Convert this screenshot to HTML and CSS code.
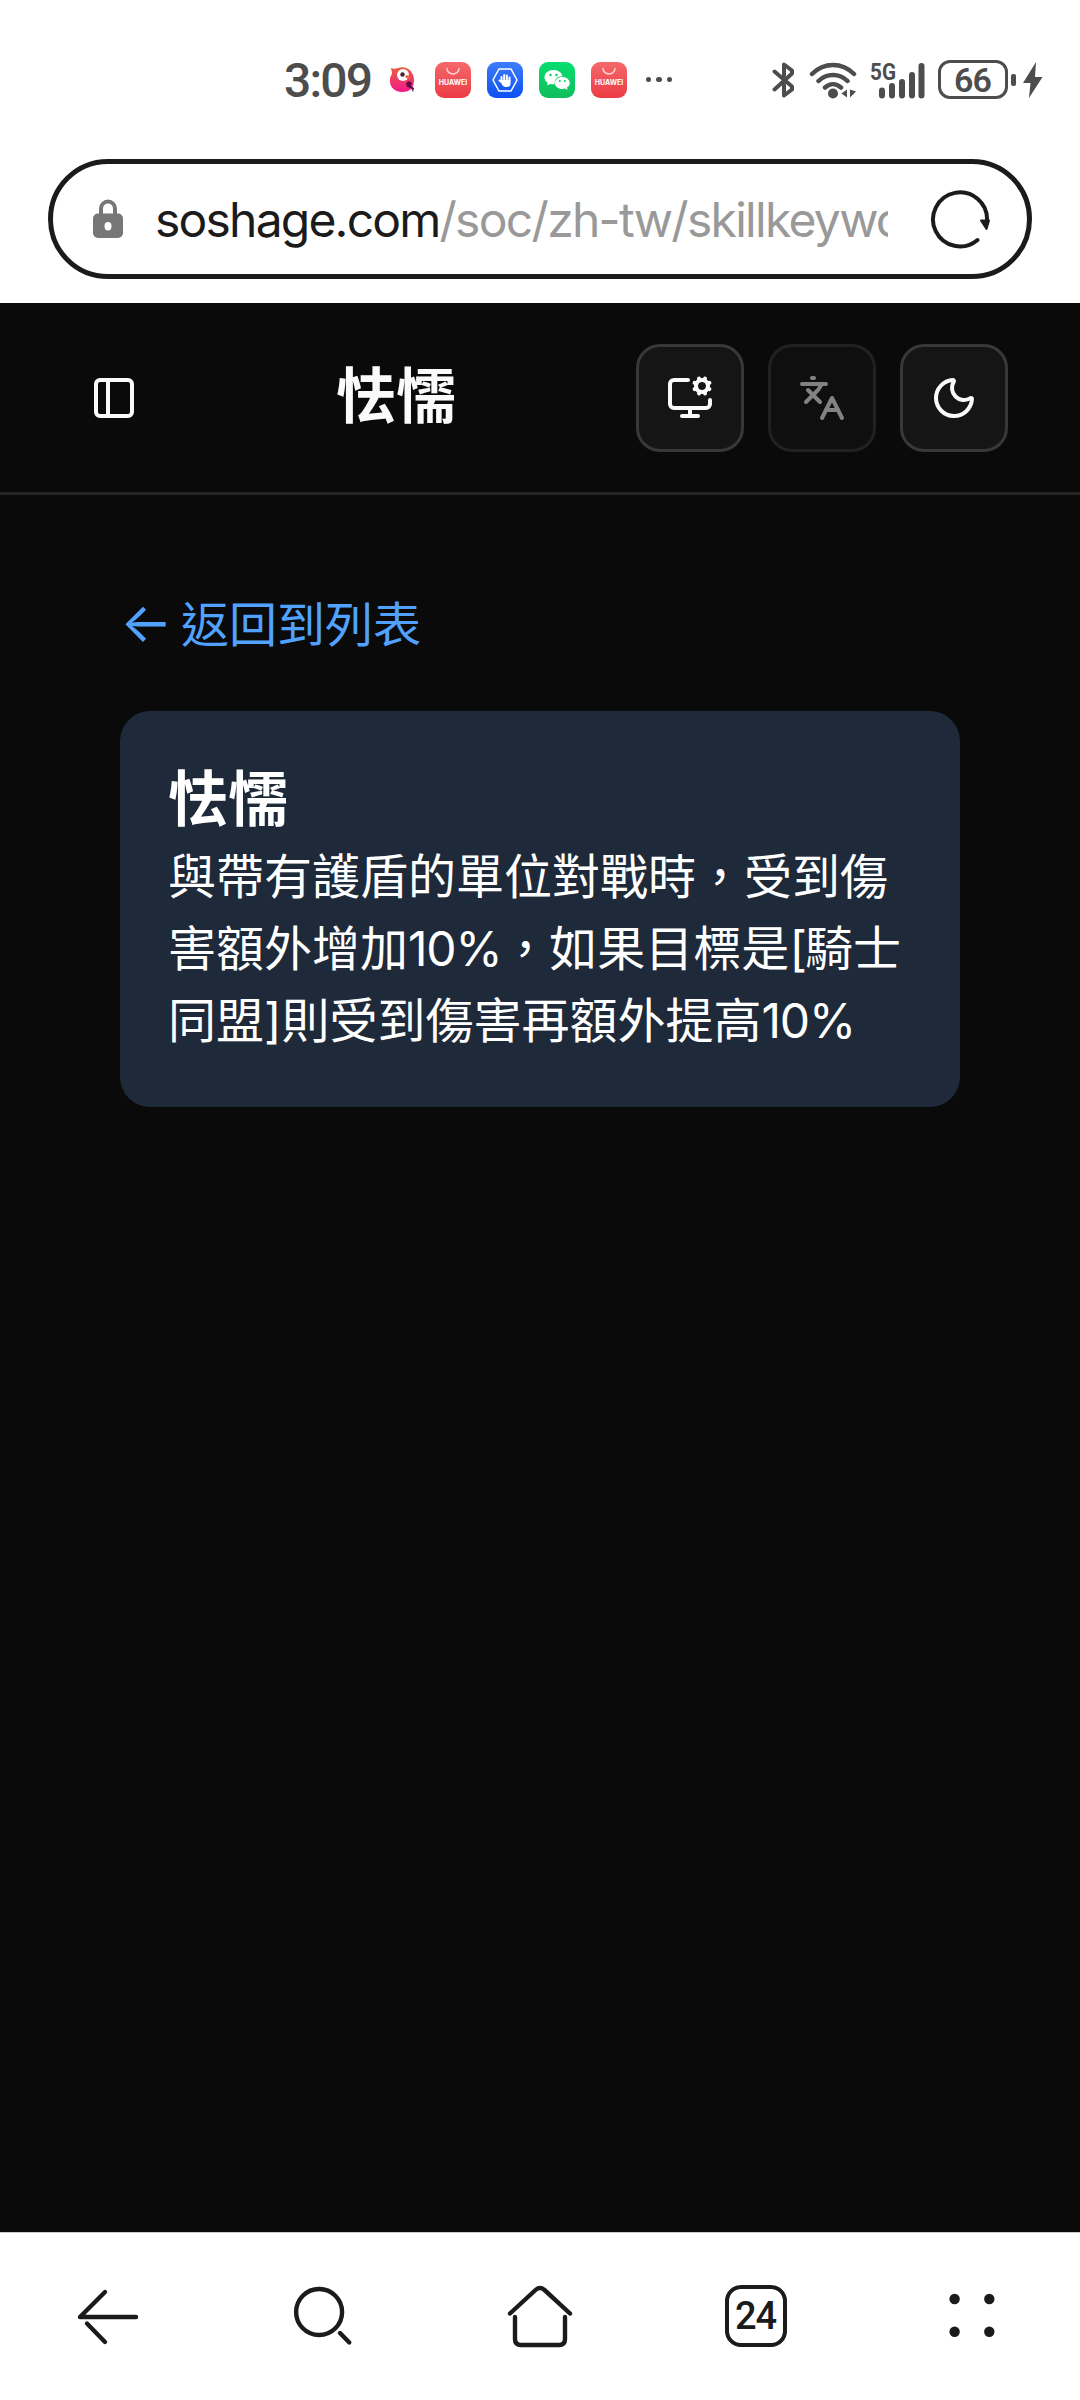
FILE: index.html
```html
<!DOCTYPE html>
<html lang="zh-Hant-TW">
<head>
<meta charset="utf-8">
<title>怯懦</title>
<link rel="stylesheet" href="styles.css">
</head>
<body>
<div class="status">
  <span class="clock">3:09</span>
  <div class="notices">
    <svg class="bird" viewBox="0 0 26 28">
      <defs><linearGradient id="bird" x1="0" y1="0" x2="0" y2="1"><stop offset="0" stop-color="#e8603c"/><stop offset="1" stop-color="#f5168c"/></linearGradient></defs>
      <path fill="url(#bird)" d="M2 2c2 1 4 1 7 0 8-3 16 3 16 12S20 26 13 26 0 21 1 13c.2-3 2-4 2-6S2 4 2 2z"/>
      <circle cx="14" cy="9" r="6" fill="#fff"/><circle cx="13.500" cy="8.500" r="2.200" fill="#4a2030"/>
      <path fill="#f2603c" d="M16 10c3-2 6 0 5 4-2-2-4-1-5-4z"/>
      <path fill="#5b0d4a" d="M17 17l3-2 3 2-1 3 3 2-1 4-2-4-4-1z"/>
    </svg>
    <div class="app app-store"><svg viewBox="0 0 36 36"><path d="M12 6.500a6 5.500 0 0 0 12 0"/></svg><span>HUAWEI</span></div>
    <div class="app app-guard"><svg viewBox="0 0 36 36"><path d="M12 7h12l6 11-6 11H12L6 18z"/><path class="hand" d="M14.500 20v-5m2.700 3.500V13m2.700 5.500V13.500M22.500 19v-3.500M15 20.500l-2.500-2"/><path class="palm" d="M13.500 18h10v3.500c0 3-2 3.500-4 3.500s-3.500-.5-4.500-2.500z"/></svg></div>
    <div class="app app-chat"><svg viewBox="0 0 36 36"><path fill="#fff" d="M14.500 8C9.500 8 5.500 11 5.500 15.200c0 2.300 1.200 4.200 3.200 5.500L8 23.500l3.200-1.600c1.500.4 3 .5 4.500.4C15 17 18.500 14 23.500 14.200 22.800 10.500 19 8 14.500 8z"/><path fill="#fff" d="M23.300 15c-4.200 0-7.500 2.700-7.500 6s3.300 6 7.500 6c1 0 2-.2 2.800-.4l2.500 1.300-.6-2.300c1.800-1.100 2.800-2.700 2.800-4.600 0-3.300-3.300-6-7.500-6z"/><g fill="#0bc75f"><circle cx="11.500" cy="13" r="1.200"/><circle cx="17.500" cy="13" r="1.200"/><circle cx="20.800" cy="19" r="1"/><circle cx="25.800" cy="19" r="1"/></g></svg></div>
    <div class="app app-store"><svg viewBox="0 0 36 36"><path d="M12 6.500a6 5.500 0 0 0 12 0"/></svg><span>HUAWEI</span></div>
    <div class="more"><i></i><i></i><i></i></div>
  </div>
  <div class="signals">
    <svg class="bluetooth" viewBox="0 0 24 38"><path d="M2.500 10.500 20 25.500v3L12 34.500V24M2.500 28.500 20 12.500V9.500L12 3.500v11"/></svg>
    <svg class="wifi" viewBox="0 0 48 38"><path d="M3 13c12-12 30-12 42 0M9.500 20c8-8 21-8 29 0M16 26.500c5-4.500 11-4.500 16 0"/><circle cx="24" cy="32.500" r="5"/><path class="tri" d="M38 28.500v8L32.500 32.500zM41 28.500v8l6-6z"/></svg>
    <svg class="cell" viewBox="0 0 56 38"><text x="0" y="18.500" textLength="26" lengthAdjust="spacingAndGlyphs">5G</text><path d="M12 29.500v5M22 25v9.500M32 21v13.500M42 14v20.500M51.500 5v29.500"/></svg>
    <div class="battery">66</div><i class="nub"></i>
    <svg class="bolt" viewBox="0 0 20 38"><path d="M13 1 0 22h7.500L6 37 19.500 16H12z"/></svg>
  </div>
</div>
<div class="address">
  <svg class="lock" viewBox="0 0 30 40"><path class="shackle" d="M8 16V9.500a7 7 0 0 1 14 0V16"/><path fill-rule="evenodd" d="M5 14.500h20a5 5 0 0 1 5 5V34a5 5 0 0 1-5 5H5a5 5 0 0 1-5-5V19.500a5 5 0 0 1 5-5zm10 8.500a3.500 4.200 0 1 0 0 8.400 3.500 4.200 0 0 0 0-8.400z"/></svg>
  <div class="url"><span class="host">soshage.com</span><span class="path">/soc/zh-tw/skillkeywo</span></div>
  <svg class="reload" viewBox="0 0 60 60"><path d="M47.500 51A27 27 0 1 1 57 32"/><path class="head" d="M51 31.500h8l-2.500 8.500z"/></svg>
</div>
<header class="topbar">
  <button class="trigger"><svg class="icon" viewBox="0 0 24 24"><rect width="18" height="18" x="3" y="3" rx="2"/><path d="M9 3v18"/></svg></button>
  <h1 class="title">怯懦</h1>
  <div class="tools">
    <button class="tool"><svg class="icon" viewBox="0 0 24 24"><path d="M12 17v4"/><path d="m14.305 7.530.923-.382"/><path d="m15.228 4.852-.923-.383"/><path d="m16.852 3.228-.383-.924"/><path d="m16.852 8.772-.383.923"/><path d="m19.148 3.228.383-.924"/><path d="m19.530 9.696-.382-.924"/><path d="m20.772 4.852.924-.383"/><path d="m20.772 7.148.924.383"/><path d="M22 13v2a2 2 0 0 1-2 2H4a2 2 0 0 1-2-2V5a2 2 0 0 1 2-2h7"/><path d="M8 21h8"/><circle cx="18" cy="6" r="3"/></svg></button>
    <button class="tool" disabled><svg class="icon" viewBox="0 0 24 24"><path d="m5 8 6 6"/><path d="m4 14 6-6 2-3"/><path d="M2 5h12"/><path d="M7 2h1"/><path d="m22 22-5-10-5 10"/><path d="M14 18h6"/></svg></button>
    <button class="tool"><svg class="icon" viewBox="0 0 24 24"><path d="M20.985 12.486a9 9 0 1 1-9.473-9.472c.405-.022.617.46.402.803a6 6 0 0 0 8.268 8.268c.344-.215.825-.004.803.401"/></svg></button>
  </div>
</header>
<main class="content">
  <a class="back"><span class="arrow">←</span><span>返回到列表</span></a>
  <section class="card">
    <h2>怯懦</h2>
    <p>與帶有護盾的單位對戰時，受到傷害額外增加<span class="num">10%</span>，如果目標是<span class="bracket">[</span>騎士同盟]則受到傷害再額外提高<span class="num">10%</span></p>
  </section>
</main>
<nav class="navbar">
  <div class="item"><svg viewBox="0 0 72 72"><path d="M64 37H8L33 12"/><path d="M33 62 15 43.500"/></svg></div>
  <div class="item"><svg viewBox="0 0 72 72"><circle cx="31.100" cy="32" r="23"/><path d="M61.300 62.500 52 53"/></svg></div>
  <div class="item"><svg viewBox="0 0 72 72"><path d="M6 33.500 31.500 10Q36 6 40.500 10L66 33.500"/><path d="M11 37v22q0 6 6 6h38q6 0 6-6V37"/></svg></div>
  <div class="item"><span class="tabs">24</span></div>
  <div class="item"><svg class="dots" viewBox="0 0 72 72"><circle cx="18.600" cy="19" r="5.200"/><circle cx="53.300" cy="19" r="5.200"/><circle cx="18.600" cy="51.700" r="5.200"/><circle cx="53.300" cy="51.700" r="5.200"/></svg></div>
</nav>
</body>
</html>
```
FILE: styles.css
```css
* { box-sizing: border-box; }
body {
  margin: 0;
  width: 1080px;
  height: 2400px;
  display: flex;
  flex-direction: column;
  background: #fff;
  font-family: Inter, "Noto Sans CJK TC", sans-serif;
  overflow: hidden;
}
svg { display: block; flex: none; }
button { padding: 0; background: none; border: 0; color: inherit; }

/* Phone status bar */
.status { height: 159px; padding: 0 37px 0 284px; display: flex; align-items: center; color: #4d4d4d; }
.clock { width: 105px; padding-top: 2px; font-family: Roboto, sans-serif; font-size: 48px; font-weight: 500; letter-spacing: -1.800px; white-space: nowrap; }
.notices { display: flex; align-items: center; gap: 16px; }
.bird { width: 26px; height: 28px; margin-right: 4px; }
.app { width: 36px; height: 36px; border-radius: 9px; position: relative; }
.app svg { width: 36px; height: 36px; fill: none; stroke: #fff; stroke-width: 1.5; stroke-linecap: round; }
.app-store { background: linear-gradient(#f4696b, #ed3b45); }
.app-store svg { stroke: #ffd3d3; }
.app-store span { position: absolute; left: 0; width: 36px; top: 16px; text-align: center; font-size: 7px; line-height: 9px; font-weight: 700; color: #fff; }
.app-guard { background: linear-gradient(#3f7dfc, #0b50f2); }
.app-guard .hand { stroke-width: 2; }
.app-guard .palm { fill: #fff; stroke: none; }
.app-chat { background: linear-gradient(#06de70, #10bd5c); }
.app-chat svg { stroke: none; }
.more { display: flex; gap: 5px; margin-left: 3px; }
.more i { width: 5.400px; height: 5.400px; border-radius: 50%; background: #4d4d4d; }
.signals { margin-left: auto; display: flex; align-items: center; fill: #4d4d4d; }
.signals svg { height: 38px; }
.bluetooth { width: 24px; margin-right: 13px; fill: none; stroke: #4d4d4d; stroke-width: 4; stroke-linecap: round; stroke-linejoin: round; }
.wifi { width: 48px; margin-right: 13px; }
.wifi path:not(.tri) { fill: none; stroke: #4d4d4d; stroke-width: 4.500; stroke-linecap: round; }
.cell { width: 56px; margin-right: 12px; }
.cell path { stroke: #4d4d4d; stroke-width: 6; stroke-linecap: round; }
.cell text { font: 700 24px Roboto, sans-serif; }
.battery { width: 70px; height: 39px; border: 3px solid #4d4d4d; border-radius: 12px; font-family: Roboto, sans-serif; font-size: 34px; line-height: 35px; font-weight: 600; letter-spacing: -1px; text-align: center; padding-right: 1px; }
.nub { width: 5px; height: 12px; border-radius: 2px; background: #4d4d4d; margin: 0 7px 0 3px; }
.bolt { width: 20px; }

/* Browser address bar */
.address { height: 120px; margin: 0 48px 24px; padding: 0 37px 0 40px; display: flex; align-items: center; border: 5px solid #1b1b1b; border-radius: 60px; }
.lock { width: 30px; height: 40px; fill: #777; }
.lock .shackle { fill: none; stroke: #777; stroke-width: 4; }
.url { width: 733px; margin-left: 32px; padding-top: 2px; overflow: hidden; white-space: nowrap; font-size: 48px; line-height: 64px; }
.host { color: #1b1b1b; letter-spacing: -1.800px; }
.path { color: #999; letter-spacing: -1.700px; }
.reload { width: 60px; height: 60px; margin-left: auto; fill: none; stroke: #1b1b1b; stroke-width: 4; stroke-linecap: round; }
.reload .head { fill: #1b1b1b; stroke-width: 2; stroke-linejoin: round; }

/* Site header */
.topbar { height: 192px; padding: 0 72px; display: flex; align-items: center; justify-content: space-between; background: #0a0a0a; border-bottom: 3px solid #262626; color: #fafafa; }
.icon { width: 48px; height: 48px; fill: none; stroke: currentColor; stroke-width: 2; stroke-linecap: round; stroke-linejoin: round; }
.trigger { width: 84px; height: 84px; display: grid; place-items: center; }
.title { margin: 0 0 4px; font-size: 60px; line-height: 84px; font-weight: 700; }
.tools { display: flex; gap: 24px; }
.tool { width: 108px; height: 108px; display: grid; place-items: center; border: 3px solid #383838; border-radius: 24px; background: #151515; }
.tool:disabled { opacity: .5; }

/* Page */
.content { flex: 1; padding: 94px 120px 0; background: #0a0a0a; }
.back { display: flex; height: 72px; font-size: 48px; line-height: 72px; color: #51a2ff; margin-bottom: 50px; }
.arrow { width: 61px; font-size: 55px; line-height: 66px; }
.card { height: 396px; padding: 46px 48px 0; border-radius: 30px; background: #1e2939; color: #fff; }
.card h2 { margin: 0; font-size: 60px; line-height: 84px; font-weight: 700; }
.card p { margin: 0; font-size: 48px; line-height: 72px; }
.num { letter-spacing: -1.200px; }
.bracket { letter-spacing: -2px; }

/* Browser toolbar */
.navbar { height: 168px; display: flex; background: #fff; border-top: 1px solid #c9c9c9; }
.item { flex: 1; display: grid; place-items: center; margin-top: -2px; }
.item svg { width: 72px; height: 72px; fill: none; stroke: #1b1b1b; stroke-width: 4.400; stroke-linecap: round; stroke-linejoin: round; }
.item .dots { fill: #1b1b1b; stroke: none; }
.tabs { width: 62px; height: 62px; border: 4.500px solid #1b1b1b; border-radius: 16px; text-align: center; font-family: Roboto, sans-serif; font-size: 38px; line-height: 54px; font-weight: 500; letter-spacing: -1px; padding-right: 1px; color: #1b1b1b; }
```
